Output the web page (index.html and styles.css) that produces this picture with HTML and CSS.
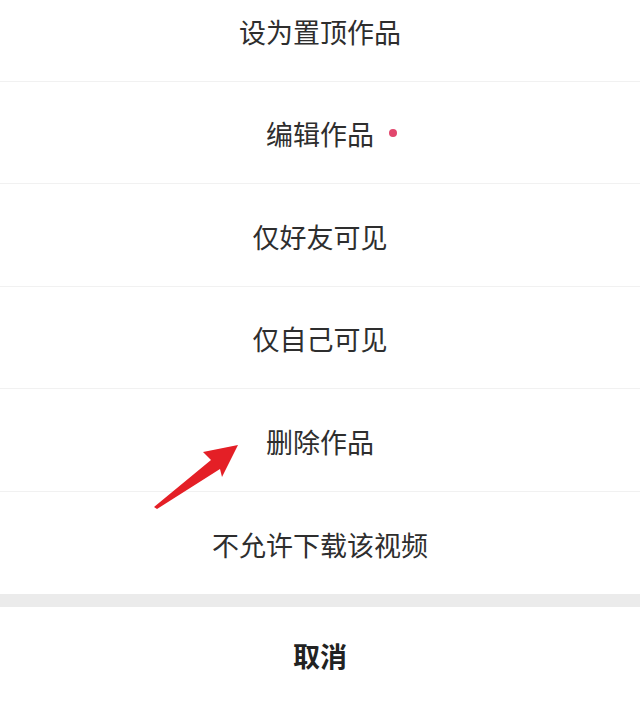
FILE: index.html
```html
<!DOCTYPE html>
<html lang="zh-CN">
<head>
<meta charset="utf-8">
<title>作品操作</title>
<link rel="stylesheet" href="styles.css">
</head>
<body>
<div class="sheet">
  <ul class="menu">
    <li class="item"><span class="label">设为置顶作品</span></li>
    <li class="item"><span class="label has-dot">编辑作品<i class="dot"></i></span></li>
    <li class="item"><span class="label">仅好友可见</span></li>
    <li class="item"><span class="label">仅自己可见</span></li>
    <li class="item"><span class="label">删除作品</span></li>
    <li class="item"><span class="label">不允许下载该视频</span></li>
  </ul>
  <div class="gap"></div>
  <div class="cancel"><span class="label bold">取消</span></div>
</div>
<svg class="arrow" width="110" height="90" viewBox="0 0 110 90">
  <polygon points="98,20 63,27 71,35 14,82 17,84 80,44 82,52" fill="#e41f26"/>
</svg>
</body>
</html>
```
FILE: styles.css
```css
html, body {
  margin: 0;
  padding: 0;
  background: #ffffff;
}
body {
  position: relative;
  width: 640px;
  height: 727px;
  overflow: hidden;
  font-family: "Noto Sans CJK SC", "Noto Sans", sans-serif;
  color: #2e2e2e;
}
.sheet {
  margin-top: -21px;
  display: flex;
  flex-direction: column;
}
.menu {
  list-style: none;
  margin: 0;
  padding: 0;
}
.item {
  box-sizing: border-box;
  height: 102.5px;
  border-bottom: 1px solid #f1f1f1;
  display: flex;
  align-items: center;
  justify-content: center;
}
.item:last-child {
  border-bottom: none;
}
.label {
  font-size: 27px;
  line-height: 1;
  position: relative;
  padding-top: 3px;
}
.label.bold {
  font-weight: 700;
  color: #222222;
}
.dot {
  position: absolute;
  right: -23px;
  top: 50%;
  width: 8px;
  height: 8px;
  margin-top: -3px;
  border-radius: 50%;
  background: #e2476d;
}
.gap {
  height: 13px;
  background: #ebebeb;
}
.cancel {
  height: 94px;
  display: flex;
  align-items: center;
  justify-content: center;
}
.arrow {
  position: absolute;
  left: 140px;
  top: 425px;
}
```
